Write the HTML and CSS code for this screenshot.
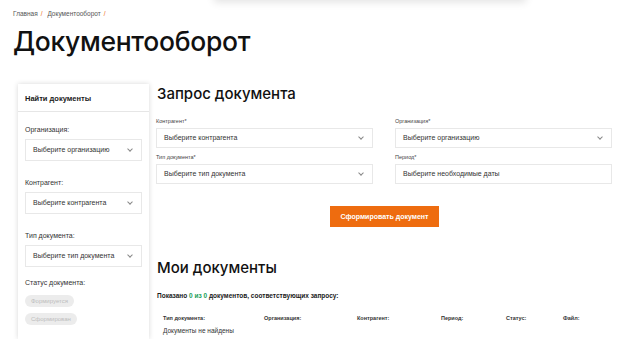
FILE: index.html
```html
<!DOCTYPE html>
<html>
<head>
    <title>Документооборот</title>
    <link rel="stylesheet" href="styles.css">
</head>
<body>
    <div class="top-shadow"></div>
    <div class="page">
        <div class="breadcrumbs">
            <a href="#">Главная</a><span class="sep">/</span>
            <a href="#">Документооборот</a><span class="sep">/</span>
        </div>
        <h1 class="page-title">Документооборот</h1>

        <div class="layout">
            <div class="filter-card">
                <div class="filter-head">Найти документы</div>
                <div class="filter-body">
                    <label class="filter-label">Организация:</label>
                    <div class="select small">Выберите организацию <span class="chev"></span></div>

                    <label class="filter-label">Контрагент:</label>
                    <div class="select small">Выберите контрагента <span class="chev"></span></div>

                    <label class="filter-label">Тип документа:</label>
                    <div class="select small">Выберите тип документа <span class="chev"></span></div>

                    <label class="filter-label status-label">Статус документа:</label>
                    <div class="pills">
                        <span class="pill">Формируется</span>
                        <span class="pill">Сформирован</span>
                    </div>
                </div>
            </div>

            <div class="main">
                <h2 class="section-title">Запрос документа</h2>
                <div class="request-form">
                    <div class="field">
                        <label>Контрагент*</label>
                        <div class="select">Выберите контрагента <span class="chev"></span></div>
                    </div>
                    <div class="field">
                        <label>Организация*</label>
                        <div class="select">Выберите организацию <span class="chev"></span></div>
                    </div>
                    <div class="field">
                        <label>Тип документа*</label>
                        <div class="select">Выберите тип документа <span class="chev"></span></div>
                    </div>
                    <div class="field">
                        <label>Период*</label>
                        <div class="select">Выберите необходимые даты</div>
                    </div>
                </div>
                <div class="submit-row">
                    <button class="submit-button">Сформировать документ</button>
                </div>

                <h2 class="section-title docs-title">Мои документы</h2>
                <div class="docs-count">Показано <span class="green">0 из 0</span> документов, соответствующих запросу:</div>

                <div class="docs-table">
                    <div class="docs-head">
                        <span>Тип документа:</span>
                        <span>Организация:</span>
                        <span>Контрагент:</span>
                        <span>Период:</span>
                        <span>Статус:</span>
                        <span>Файл:</span>
                    </div>
                    <div class="docs-empty">Документы не найдены</div>
                </div>
            </div>
        </div>
    </div>
</body>
</html>
```

FILE: styles.css
```css
body {
    margin: 0;
    padding: 0;
    background-color: #fff;
    font-family: "Liberation Sans", Arial, sans-serif;
    color: #1a1a1a;
    overflow: hidden;
}

.top-shadow {
    position: absolute;
    top: -20px;
    left: 214px;
    width: 312px;
    height: 20px;
    box-shadow: 0 2px 8px rgba(0, 0, 0, 0.12);
    background-color: #fff;
}

.page {
    padding: 9px 12px 0 13px;
}

.breadcrumbs {
    font-size: 6.5px;
    color: #555;
    height: 9px;
    line-height: 9px;
}

.breadcrumbs a {
    color: #555;
    text-decoration: none;
}

.breadcrumbs .sep {
    color: #ee6c0f;
    margin: 0 3px;
}

.page-title {
    font-family: Inter, "Liberation Sans", sans-serif;
    font-size: 26.5px;
    font-weight: 500;
    letter-spacing: -0.3px;
    color: #111;
    margin: 6px 0 0 0;
    line-height: 34px;
}

.layout {
    display: flex;
    align-items: flex-start;
    margin-top: 26px;
}

.filter-card {
    width: 131px;
    margin-left: 5px;
    background-color: #fff;
    box-shadow: 0 0 5px rgba(0, 0, 0, 0.16);
    padding-bottom: 14px;
}

.filter-head {
    font-size: 7.5px;
    font-weight: bold;
    line-height: 9px;
    padding: 10px 7px 8px;
    border-bottom: 1px solid #e6e6e6;
}

.filter-body {
    padding: 13px 7px 0;
    display: flex;
    flex-direction: column;
}

.filter-label {
    font-size: 7px;
    line-height: 9px;
    color: #333;
    margin-bottom: 5px;
}

.filter-label.status-label {
    margin-top: -6px;
}

.select {
    position: relative;
    height: 20px;
    border: 1px solid #e8e8e8;
    box-sizing: border-box;
    font-size: 7px;
    color: #333;
    line-height: 18px;
    padding-left: 7px;
}

.select.small {
    height: 22px;
    line-height: 20px;
    margin-bottom: 17px;
}

.chev {
    position: absolute;
    right: 9px;
    top: 6px;
    width: 3px;
    height: 3px;
    border-right: 1px solid #888;
    border-bottom: 1px solid #888;
    transform: rotate(45deg);
}

.select.small .chev {
    top: 7px;
}

.pills {
    display: flex;
    flex-direction: column;
    align-items: flex-start;
    gap: 6px;
    margin-top: 3px;
}

.pill {
    background-color: #ececec;
    color: #bdbdbd;
    font-size: 6px;
    line-height: 8px;
    padding: 2px 6px;
    border-radius: 7px;
}

.main {
    flex: 1;
    margin-left: 8px;
}

.section-title {
    font-family: Inter, "Liberation Sans", sans-serif;
    font-size: 15px;
    font-weight: 500;
    color: #111;
    margin: 0;
    line-height: 20px;
}

.request-form {
    display: grid;
    grid-template-columns: 217px 217px;
    column-gap: 22px;
    row-gap: 6px;
    margin-top: 14px;
    margin-left: -1px;
}

.field label {
    display: block;
    font-size: 5.5px;
    color: #444;
    margin-bottom: 4px;
}

.submit-row {
    display: flex;
    justify-content: center;
    margin-top: 22px;
}

.submit-button {
    background-color: #ee6c0f;
    color: #fff;
    border: none;
    font-family: "Liberation Sans", Arial, sans-serif;
    font-size: 7px;
    font-weight: bold;
    height: 21px;
    padding: 0 10px;
    cursor: pointer;
}

.docs-title {
    margin-top: 31px;
}

.docs-count {
    font-size: 6.5px;
    font-weight: bold;
    margin-top: 14px;
}

.docs-count .green {
    color: #18a058;
}

.docs-table {
    margin-top: 16px;
    padding-left: 6px;
}

.docs-head {
    display: grid;
    grid-template-columns: 101px 93px 84px 65px 57px 40px;
    font-size: 5.5px;
    font-weight: bold;
    color: #333;
}

.docs-empty {
    font-size: 6.5px;
    color: #333;
    margin-top: 6px;
}
```
